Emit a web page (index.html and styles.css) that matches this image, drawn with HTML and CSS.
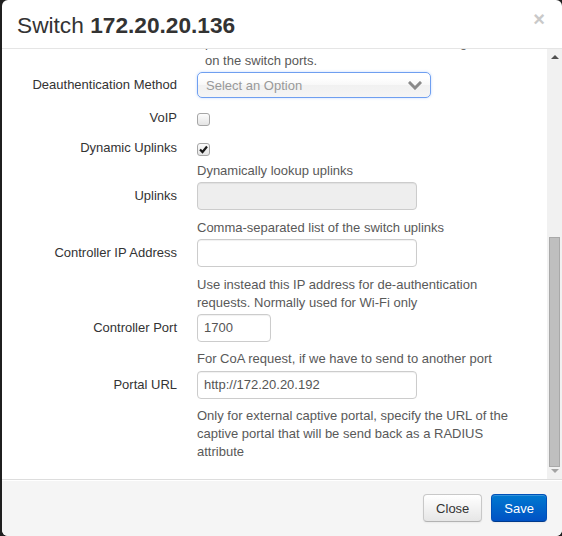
FILE: index.html
```html
<!DOCTYPE html>
<html>
<head>
<meta charset="utf-8">
<link rel="stylesheet" href="styles.css">
</head>
<body>
<div class="modal">
  <div class="modal-header">
    <h3 class="title">Switch <strong>172.20.20.136</strong></h3>
    <span class="close">×</span>
  </div>
  <div class="modal-body">
    <div class="scroll-content">
      <p class="help lead-help">provide method to deauthenticate when using<br>on the switch ports.</p>

      <div class="group">
        <label class="label label-select">Deauthentication Method</label>
        <div class="controls">
          <div class="select">
            <span class="select-text">Select an Option</span>
            <svg class="chevron" width="14" height="9" viewBox="0 0 14 9"><path d="M2 2 L7 7 L12 2" fill="none" stroke="#8a8a8a" stroke-width="3" stroke-linecap="square"/></svg>
          </div>
        </div>
      </div>

      <div class="group group-check">
        <label class="label label-check">VoIP</label>
        <div class="controls">
          <span class="checkbox"></span>
        </div>
      </div>

      <div class="group group-check">
        <label class="label label-check">Dynamic Uplinks</label>
        <div class="controls">
          <span class="checkbox checked"><svg width="11" height="11" viewBox="0 0 11 11"><path d="M2 5.5 L4.5 8 L9 2.5" fill="none" stroke="#1a1a1a" stroke-width="2.2"/></svg></span>
          <p class="help help-check">Dynamically lookup uplinks</p>
        </div>
      </div>

      <div class="group">
        <label class="label">Uplinks</label>
        <div class="controls">
          <div class="input input-wide input-disabled"></div>
          <p class="help">Comma-separated list of the switch uplinks</p>
        </div>
      </div>

      <div class="group">
        <label class="label">Controller IP Address</label>
        <div class="controls">
          <div class="input input-wide"></div>
          <p class="help">Use instead this IP address for de-authentication requests. Normally used for Wi-Fi only</p>
        </div>
      </div>

      <div class="group">
        <label class="label">Controller Port</label>
        <div class="controls">
          <div class="input input-small">1700</div>
          <p class="help help-tight">For CoA request, if we have to send to another port</p>
        </div>
      </div>

      <div class="group group-portal">
        <label class="label">Portal URL</label>
        <div class="controls">
          <div class="input input-wide">http://172.20.20.192</div>
          <p class="help help-tight">Only for external captive portal, specify the URL of the captive portal that will be send back as a RADIUS attribute</p>
        </div>
      </div>
    </div>
    <div class="scrollbar">
      <div class="sb-btn"><span class="arrow-up"></span></div>
      <div class="sb-track"><div class="sb-thumb"></div></div>
      <div class="sb-btn sb-btn-bottom"><span class="arrow-down"></span></div>
    </div>
  </div>
  <div class="modal-footer">
    <button class="btn">Close</button>
    <button class="btn btn-primary">Save</button>
  </div>
</div>
</body>
</html>
```

FILE: styles.css
```css
* { box-sizing: border-box; }
html, body { margin: 0; padding: 0; }
body {
  background: #1f1f1f;
  font-family: "Liberation Sans", Arial, sans-serif;
  font-size: 13px;
  color: #333;
  width: 562px;
  height: 536px;
  overflow: hidden;
}
.modal {
  margin-left: 2px;
  width: 560px;
  height: 536px;
  background: #fff;
  border-radius: 6px;
  overflow: hidden;
  display: flex;
  flex-direction: column;
}
.modal-header {
  height: 49px;
  flex: none;
  border-bottom: 1px solid #e5e5e5;
  display: flex;
  align-items: center;
  padding: 0 15px;
}
.title {
  margin: 0;
  font-size: 22.7px;
  font-weight: normal;
  color: #333;
  line-height: 30px;
  padding-top: 1px;
}
.title strong { font-weight: bold; }
.close {
  margin-left: auto;
  align-self: flex-start;
  margin-top: 8px;
  margin-right: 2px;
  font-size: 20px;
  font-weight: bold;
  line-height: 22px;
  color: #c9c9c9;
}
.modal-body {
  height: 430px;
  flex: none;
  display: flex;
}
.scroll-content {
  flex: 1;
  overflow: hidden;
  padding-left: 15px;
}
.help {
  margin: 9px 0 0;
  line-height: 18px;
  color: #595959;
  max-width: 322px;
}
.lead-help {
  margin-top: -15px;
  padding-left: 188px;
  max-width: none;
  white-space: nowrap;
}
.help-check { margin-top: 6px; }
.help-tight { margin-top: 8px; }
.group {
  display: grid;
  grid-template-columns: 160px 1fr;
  column-gap: 20px;
  margin-top: 2px;
}
.group-check { margin-top: 11px; }
.group-check + .group-check { margin-top: 12px; }
.group-portal { margin-top: 3px; }
.label {
  text-align: right;
  line-height: 28px;
  color: #333;
  font-size: 13px;
  white-space: nowrap;
}
.label-select { line-height: 26px; }
.label-check { line-height: 18px; }
.controls { min-width: 0; }
.select {
  width: 234px;
  height: 26px;
  border: 1px solid #6f9ff0;
  border-radius: 5px;
  background: linear-gradient(#fff 20%, #f8f8f8 50%, #f1f1f1 52%, #f5f5f5 100%);
  box-shadow: 0 0 3px rgba(88, 151, 251, 0.35);
  display: flex;
  align-items: center;
  padding: 0 8px 0 8px;
}
.select-text { color: #999; flex: 1; }
.chevron { display: block; }
.checkbox {
  display: flex;
  align-items: center;
  justify-content: center;
  width: 13px;
  height: 13px;
  margin-top: 4px;
  border: 1px solid #a6a6a6;
  border-radius: 3px;
  background: linear-gradient(#fcfcfc, #e4e4e4);
}
.input {
  height: 28px;
  border: 1px solid #ccc;
  border-radius: 4px;
  background: #fff;
  box-shadow: inset 0 1px 1px rgba(0, 0, 0, 0.06);
  padding: 0 6px;
  line-height: 26px;
  color: #555;
}
.input-wide { width: 220px; }
.input-small { width: 74px; }
.input-disabled { background: #eee; }
.scrollbar {
  width: 15px;
  flex: none;
  background: #f1f1f1;
  display: flex;
  flex-direction: column;
}
.sb-btn {
  height: 15px;
  flex: none;
  display: flex;
  justify-content: center;
  align-items: center;
}
.sb-btn-bottom { height: 12px; align-items: flex-start; padding-top: 2px; }
.arrow-up {
  width: 0; height: 0;
  border-left: 4px solid transparent;
  border-right: 4px solid transparent;
  border-bottom: 4px solid #505050;
}
.arrow-down {
  width: 0; height: 0;
  border-left: 4px solid transparent;
  border-right: 4px solid transparent;
  border-top: 4px solid #a3a3a3;
}
.sb-track {
  flex: 1;
  padding: 0 2px;
}
.sb-thumb {
  margin-top: 173px;
  height: 230px;
  background: #bfbfbf;
  border: 1px solid #a9a9a9;
}
.modal-footer {
  flex: 1;
  background: #f5f5f5;
  border-top: 1px solid #ddd;
  box-shadow: inset 0 1px 0 #fff;
  display: flex;
  justify-content: flex-end;
  align-items: flex-start;
  gap: 9px;
  padding: 14px 15px 0;
}
.btn {
  height: 28px;
  padding: 0 12px;
  font-family: "Liberation Sans", Arial, sans-serif;
  font-size: 13px;
  color: #333;
  border: 1px solid #c8c8c8;
  border-bottom-color: #b3b3b3;
  border-radius: 4px;
  background: linear-gradient(#ffffff, #e6e6e6);
  box-shadow: inset 0 1px 0 rgba(255,255,255,.2), 0 1px 2px rgba(0,0,0,.05);
}
.btn-primary {
  color: #fff;
  background: linear-gradient(#0079d0, #0052c4);
  border-color: #0050b8 #0050b8 #003a8c;
}
```
